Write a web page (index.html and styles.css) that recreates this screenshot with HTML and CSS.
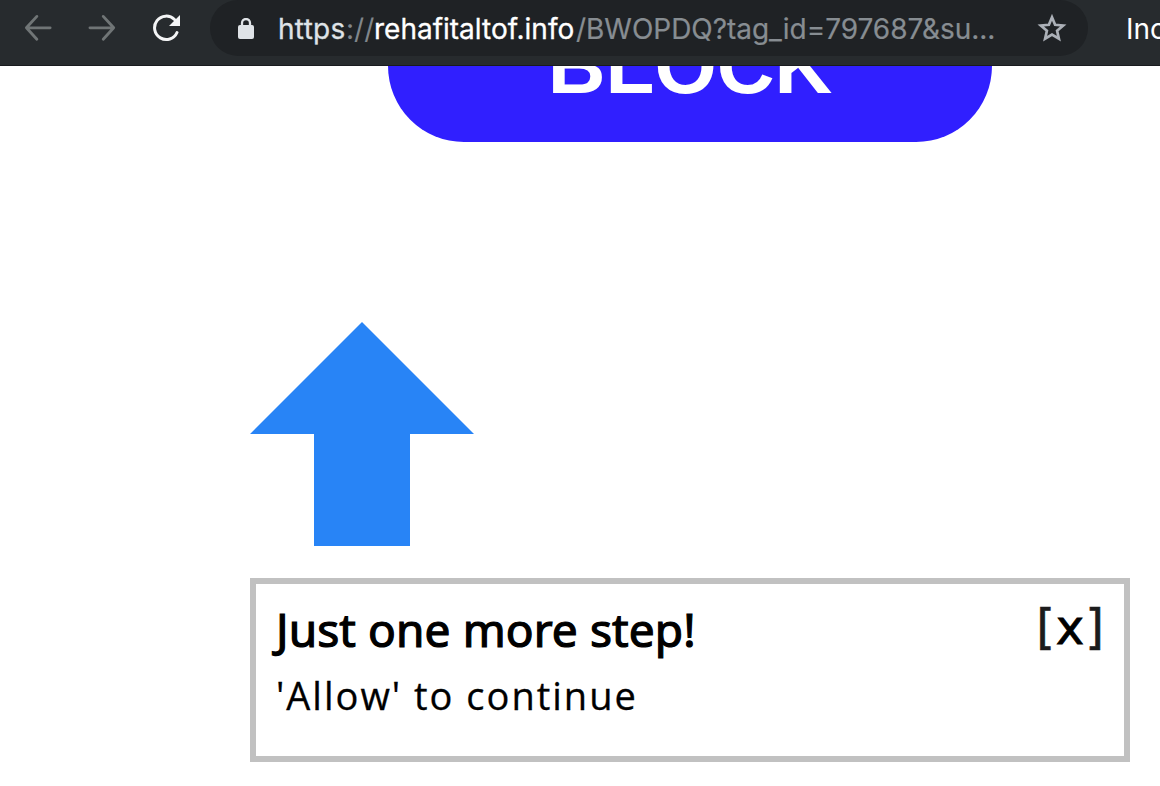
FILE: index.html
```
<!DOCTYPE html>
<html lang="en">
<head>
<meta charset="utf-8">
<title>Just one more step!</title>
<link rel="stylesheet" href="styles.css">
</head>
<body>
<header class="toolbar">
  <nav class="nav">
    <svg class="nav-arrow" width="28" height="28" viewBox="0 0 28 28"><path d="M13 2 2 14l11 12M2 14h25" transform="translate(.5 .5) scale(.95)"/></svg>
    <svg class="nav-arrow" width="28" height="28" viewBox="0 0 28 28"><path d="M15 2l11 12-11 12M26 14H1" transform="translate(1 .5) scale(.95)"/></svg>
    <svg class="reload" width="28" height="28" viewBox="0 0 28 28"><path class="reload-ring" d="M22.5 5.5A11.7 11.7 0 1 0 25 18.5"/><path class="reload-tip" d="M28 1v11H17z"/></svg>
  </nav>
  <div class="address">
    <svg class="lock" width="16" height="21" viewBox="0 0 16 21"><path class="shackle" d="M4 8V5a4 4 0 0 1 8 0v3"/><rect y="7" width="16" height="14" rx="2"/></svg>
    <div class="url"><span class="scheme">https</span><span class="slashes">://</span><span class="host">rehafitaltof.info</span><span class="path">/BWOPDQ?tag_id=797687&amp;su...</span></div>
    <svg class="star" width="30" height="29" viewBox="0 0 30 29"><path d="M15 3.3l3.1 7.5 8.1.7-6.1 5.3 1.8 7.9-6.9-4.2-6.9 4.2 1.8-7.9-6.1-5.3 8.1-.7z"/></svg>
  </div>
  <span class="profile">Incognito</span>
</header>
<main class="page">
  <button class="block">BLOCK</button>
  <svg class="arrow" width="224" height="224" viewBox="0 0 224 224"><path d="M112 0l112 112h-64v112H64V112H0z"/></svg>
  <section class="prompt">
    <div class="message">
      <h1 class="title">Just one more step!</h1>
      <p class="hint">'Allow' to continue</p>
    </div>
    <div class="close"><span class="bracket">[</span>x<span class="bracket">]</span></div>
  </section>
</main>
</body>
</html>
```
FILE: styles.css
```
* { box-sizing: border-box; }
body { margin: 0; width: 1160px; height: 786px; overflow: hidden; background: #fff; }
.toolbar { display: flex; height: 66px; background: #272b2e; border-bottom: 1px solid #191b1f; overflow: hidden; font-family: Inter, "Liberation Sans", sans-serif; font-size: 28px; line-height: 58px; white-space: nowrap; }
.nav { display: flex; gap: 36px; flex: none; width: 210px; height: 56px; padding: 14px 0 0 24px; }
.nav svg { flex: none; }
.nav-arrow path { fill: none; stroke: #707576; stroke-width: 3; stroke-linecap: round; stroke-linejoin: round; }
.reload-ring { fill: none; stroke: #f4f5f6; stroke-width: 3; stroke-linecap: round; }
.reload-tip { fill: #f4f5f6; }
.address { display: flex; align-items: center; flex: none; width: 878px; height: 56px; padding-left: 28px; border-radius: 28px; background: #1f2225; }
.lock { flex: none; margin-right: 24px; fill: #dfe3e7; }
.shackle { fill: none; stroke: #dfe3e7; stroke-width: 2.3; }
.url { display: flex; width: 760px; height: 56px; }
.scheme { width: 68px; color: #dfe3e7; letter-spacing: .3px; -webkit-text-stroke: .3px #dfe3e7; }
.slashes { width: 28px; color: #80868b; }
.host { width: 202px; color: #fff; -webkit-text-stroke: .3px #fff; }
.path { color: #878d92; letter-spacing: -.03px; -webkit-text-stroke: .2px #878d92; }
.star { flex: none; margin-left: -1px; fill: none; stroke: #abb0b7; stroke-width: 2.7; }
.profile { padding-left: 38px; color: #fff; }
.page { display: flex; flex-direction: column; height: 720px; overflow: hidden; }
.block { flex: none; width: 604px; height: 152px; margin: -76px 0 0 388px; padding: 0; border: 0; border-radius: 76px; background: #301fff; color: #fff; font: 700 80px/152px "Liberation Sans", Arial, sans-serif; }
.arrow { flex: none; margin: 180px 0 32px 250px; fill: #2884f6; }
.prompt { display: flex; justify-content: space-between; flex: none; width: 880px; height: 184px; margin-left: 250px; padding: 15px 20px 0; border: 6px solid #c1c1c1; color: #000; font-family: "Noto Sans", sans-serif; }
.title { margin: 0; font-size: 46px; line-height: 61px; font-weight: 400; letter-spacing: .1px; -webkit-text-stroke: 1.2px #000; }
.hint { margin: 5px 0 0; font-family: "Open Sans", "Noto Sans", sans-serif; font-size: 38px; line-height: 60px; letter-spacing: 2px; -webkit-text-stroke: .3px #000; }
.close { display: flex; gap: 1px; font-family: "DejaVu Sans", sans-serif; font-size: 48px; line-height: 56px; -webkit-text-stroke: .8px #000; }
.bracket { color: #1c1c1c; -webkit-text-stroke: .6px #1c1c1c; }
```
